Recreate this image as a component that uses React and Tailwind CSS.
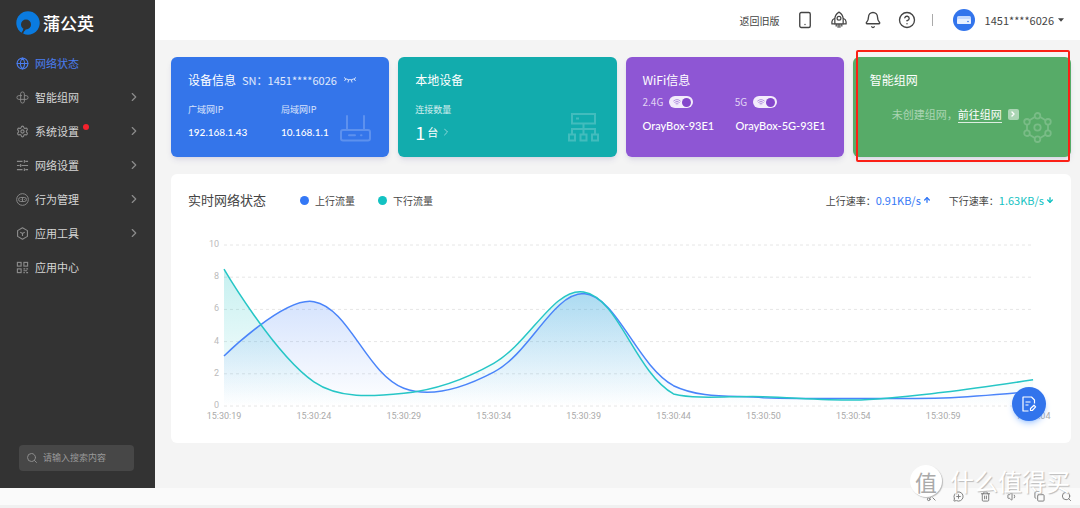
import {
  Globe,
  Settings,
  Smartphone,
  Bell,
  CircleHelp,
  ChevronRight,
  Search,
  Wifi,
  ArrowUp,
  ArrowDown,
  Trash2,
  Volume1,
  Copy,
  Scissors,
  MessageCirclePlus,
} from 'lucide-react'

const times = ['15:30:19', '15:30:24', '15:30:29', '15:30:34', '15:30:39', '15:30:44', '15:30:50', '15:30:54', '15:30:59', '15:31:04']
const upload = [3.1, 6.48, 1.1, 2.1, 6.98, 1.26, 0.52, 0.46, 0.5, 0.91]
const download = [8.5, 1.5, 0.79, 2.65, 7.08, 0.75, 0.58, 0.37, 0.85, 1.63]

const BASE = 180
const SMOOTH = 0.36
const toPoint = (v, i) => [53 + i * 89.9, BASE - v * 16.1]

// smooth bezier line, control points never leave the range of the data
function smoothLine(values) {
  const pts = values.map(toPoint)
  const ys = pts.map((p) => p[1])
  const clamp = (y) => Math.min(Math.max(y, Math.min(...ys)), Math.max(...ys))
  const dist = (a, b) => Math.hypot(a[0] - b[0], a[1] - b[1])

  const controls = pts.map((p, i) => {
    const prev = pts[i - 1]
    const next = pts[i + 1]
    if (!prev || !next) return [p, p]
    const vx = (next[0] - prev[0]) * SMOOTH
    const vy = (next[1] - prev[1]) * SMOOTH
    const d0 = dist(p, prev)
    const d1 = dist(p, next)
    const a = d0 / (d0 + d1)
    const b = d1 / (d0 + d1)
    return [
      [p[0] - vx * a, clamp(p[1] - vy * a)],
      [p[0] + vx * b, clamp(p[1] + vy * b)],
    ]
  })

  return pts
    .map((p, i) => (i === 0 ? `M${p}` : `C${controls[i - 1][1]} ${controls[i][0]} ${p}`))
    .join(' ')
}

function MeshIcon({ className }) {
  return (
    <svg viewBox="0 0 14 14" fill="none" stroke="currentColor" className={className}>
      <path d="M5 5V3a2 2 0 0 1 4 0v6.500M9 5h2a2 2 0 0 1 0 4H4.500M9 9v2a2 2 0 0 1-4 0V4.500M5 9H3a2 2 0 0 1 0-4h3.500" />
    </svg>
  )
}

function SlidersIcon({ className }) {
  return (
    <svg viewBox="0 0 14 14" fill="none" stroke="currentColor" strokeWidth="1.200" className={className}>
      <path d="M1 2.500h6M10 2.500h3M9 1v3M1 7h3M6 7h7M5 5.500v3M1 11.500h6M10 11.500h3M9 10v3" />
    </svg>
  )
}

function BehaviorIcon({ className }) {
  return (
    <svg viewBox="0 0 14 14" fill="none" stroke="currentColor" className={className}>
      <circle cx="7" cy="7" r="6.300" />
      <rect x="2.800" y="4.800" width="8.400" height="4.400" rx="2.200" />
      <path d="M7 5v4M5 7h.8M8.500 7h.8" />
    </svg>
  )
}

function ToolsIcon({ className }) {
  return (
    <svg viewBox="0 0 14 14" fill="none" stroke="currentColor" strokeWidth="1.200" strokeLinejoin="round" className={className}>
      <path d="M7 .9l5.300 3v6.200l-5.300 3-5.300-3V3.900z" />
      <path d="M4.500 5.500L7 7l2.500-1.500M7 7v2.800" />
    </svg>
  )
}

function AppsIcon({ className }) {
  return (
    <svg viewBox="0 0 14 14" fill="none" stroke="currentColor" strokeWidth="1.200" className={className}>
      <rect x="1.500" y="1.500" width="4" height="4" />
      <rect x="8.500" y="1.500" width="4" height="4" />
      <rect x="1.500" y="8.500" width="4" height="4" />
      <path d="M8 8.500h2M11 8.500h2M8 10.500h4M8 12.500h1.500M11 12.500h2" />
    </svg>
  )
}

function RocketIcon({ className }) {
  return (
    <svg viewBox="0 0 16 16" fill="none" stroke="currentColor" strokeWidth="1.100" strokeLinejoin="round" className={className}>
      <path d="M8 1C5.500 2.600 4.300 4.600 4.300 7v4.500h7.400V7C11.700 4.600 10.500 2.600 8 1z" />
      <circle cx="8" cy="6.500" r="1.700" />
      <path d="M4.300 6.500C2.600 7.300 1.700 8.300 1.700 9.500v2h2.600M11.700 6.500c1.700.8 2.600 1.800 2.600 3v2h-2.600M5.500 11.500v2.300M7.200 11.500v3.300M8.800 11.500v3.300M10.500 11.500v2.300" />
    </svg>
  )
}

function Logo() {
  return (
    <svg viewBox="0 0 24 24" className="size-6">
      <circle cx="12" cy="12" r="11.700" fill="#0a7be0" />
      <circle cx="10" cy="13.500" r="5" fill="#333" />
      <path d="M6.800 17.200c.8 1.400.2 2.500-1.400 4.300l1.700 1.900c.3-2 .9-3.200 2.900-4.900z" fill="#333" />
    </svg>
  )
}

const menu = [
  { label: '网络状态', icon: Globe, active: true },
  { label: '智能组网', icon: MeshIcon, more: true },
  { label: '系统设置', icon: Settings, more: true, dot: true },
  { label: '网络设置', icon: SlidersIcon, more: true },
  { label: '行为管理', icon: BehaviorIcon, more: true },
  { label: '应用工具', icon: ToolsIcon, more: true },
  { label: '应用中心', icon: AppsIcon },
]

function Sidebar() {
  return (
    <aside className="flex w-[155px] shrink-0 flex-col bg-[#333] pb-[17px]">
      <div className="flex h-[46px] items-center gap-[3px] pl-4">
        <Logo />
        <span className="text-[17px] leading-5 font-medium text-white">蒲公英</span>
      </div>
      <nav>
        {menu.map(({ label, icon: Icon, active, more, dot }) => (
          <a
            key={label}
            href="#"
            className={`flex h-[34px] items-center pr-3.5 pl-4 text-[11px] ${active ? 'text-[#4a7df0]' : 'text-[#d6d6d6]'}`}
          >
            <Icon className={`mr-1.5 size-[13px] ${active ? '' : 'text-[#8c8c8c]'}`} />
            {label}
            {dot && <span className="mb-2 ml-1 size-1.5 rounded-full bg-[#f5222d]" />}
            {more && <ChevronRight className="ml-auto size-3.5 text-[#8c8c8c]" />}
          </a>
        ))}
      </nav>
      <label className="mt-auto mr-[21px] ml-[19px] flex h-[26px] items-center gap-[5px] rounded-sm bg-[#474747] px-[7px]">
        <Search className="size-3 shrink-0 text-[#8c8c8c]" />
        <input
          type="text"
          aria-label="搜索"
          placeholder="请输入搜索内容"
          className="w-full min-w-0 bg-transparent text-[9px] text-white outline-none placeholder:text-[#999]"
        />
      </label>
    </aside>
  )
}

function Header() {
  return (
    <header className="flex h-10 items-center justify-end bg-white pr-4 text-[#444]">
      <a href="#" className="mr-4 text-[10px]">返回旧版</a>
      <div className="flex items-center gap-4">
        <button aria-label="手机"><Smartphone strokeWidth={1.8} className="size-[18px]" /></button>
        <button aria-label="升级"><RocketIcon className="size-[18px]" /></button>
        <button aria-label="通知"><Bell strokeWidth={1.8} className="size-[18px]" /></button>
        <button aria-label="帮助"><CircleHelp strokeWidth={1.8} className="size-[18px]" /></button>
        <span className="h-3 w-px bg-[#aaa]" />
      </div>
      <button className="ml-5 flex items-center text-[11px]">
        <span className="mr-2.5 flex size-[22px] items-center justify-center rounded-full bg-[#3274ec]">
          <svg viewBox="0 0 14 8" className="h-2 w-3.5">
            <rect width="14" height="8" rx="1.500" fill="#c3d8fd" />
            <rect y="3" width="14" height="5" rx="1.500" fill="#e8f0ff" />
            <circle cx="11" cy="5.500" r=".8" fill="#3274ec" />
          </svg>
        </span>
        1451****6026
        <svg viewBox="0 0 6 4" className="ml-1 h-1 w-1.5"><path d="M0 .3h6L3 3.700z" fill="#444" /></svg>
      </button>
    </header>
  )
}

function Card({ className, children }) {
  return (
    <section className={`relative h-[100px] rounded-md px-[17px] pt-[13px] text-white shadow-md shadow-indigo-900/10 ${className}`}>
      {children}
    </section>
  )
}

function WifiSwitch({ label }) {
  return (
    <label className="relative flex w-[93px] items-center gap-1.5 text-[10px] leading-3 text-white/75">
      {label}
      <input type="checkbox" defaultChecked className="sr-only" />
      <span className="flex h-3 w-6 items-center justify-between rounded-full bg-[#f3ecfb] px-0.5">
        <Wifi strokeWidth={3} className="ml-0.5 size-2 text-[#b493e0]" />
        <span className="size-[9px] rounded-full bg-[#8446cb]" />
      </span>
    </label>
  )
}

function Cards() {
  return (
    <div className="grid grid-cols-4 gap-[9px]">
      <Card className="bg-[#3475ea]">
        <h2 className="flex items-center text-[12px] leading-5">
          设备信息
          <span className="ml-1.5 text-[11px] text-white/85">SN：1451****6026</span>
          <svg viewBox="0 0 14 8" fill="none" stroke="currentColor" strokeOpacity=".8" className="ml-1.5 h-2 w-3.5">
            <path d="M1 1.500c3.500 3 8.500 3 12 0M2.800 3L1.500 5M5.500 4L5 6.500M8.500 4L9 6.500M11.200 3l1.300 2" />
          </svg>
        </h2>
        <dl className="mt-3 flex">
          <div className="w-[93px]">
            <dt className="text-[9px] leading-4 text-white/80">广域网IP</dt>
            <dd className="mt-1 font-[Lato] text-[10px] leading-5 font-medium">192.168.1.43</dd>
          </div>
          <div>
            <dt className="text-[9px] leading-4 text-white/80">局域网IP</dt>
            <dd className="mt-1 font-[Lato] text-[10px] leading-5 font-medium">10.168.1.1</dd>
          </div>
        </dl>
        <svg viewBox="0 0 31 31" fill="none" stroke="white" strokeWidth="2" strokeLinecap="round" className="absolute right-[18px] bottom-[15px] size-[31px] opacity-20">
          <rect x="1" y="19" width="29" height="10.500" rx="2" />
          <path d="M7 18V5M24 18V5M9 24.300h6M21 24.300h.5" />
        </svg>
      </Card>

      <Card className="bg-[#12acad]">
        <h2 className="text-[12px] leading-5">本地设备</h2>
        <p className="mt-3 text-[9px] leading-4 text-white/80">连接数量</p>
        <a href="#" className="mt-1 flex items-center gap-0.5 text-[11px] leading-5">
          <span className="text-[18px]">1</span>
          台
          <ChevronRight strokeWidth={1.500} className="size-3 opacity-70" />
        </a>
        <svg viewBox="0 0 31 31" fill="none" stroke="white" strokeWidth="2" className="absolute right-[18px] bottom-[15px] size-[31px] opacity-20">
          <path d="M4 3h23v9.500H4zM8 7.500h3M15.500 12.500v11M4 23.500V18h23v5.500M1 23.500h6v6H1zM12.500 23.500h6v6h-6zM24 23.500h6v6h-6z" />
        </svg>
      </Card>

      <Card className="bg-[#8e56d4]">
        <h2 className="text-[12px] leading-5">WiFi信息</h2>
        <div className="mt-1.5 flex">
          <WifiSwitch label="2.4G" />
          <WifiSwitch label="5G" />
        </div>
        <div className="mt-2 flex font-[Lato] text-[11px] leading-5 font-medium whitespace-nowrap">
          <span className="w-[93px] shrink-0">OrayBox-93E1</span>
          <span>OrayBox-5G-93E1</span>
        </div>
      </Card>

      <Card className="bg-[#57ab68]">
        <h2 className="text-[12px] leading-5">智能组网</h2>
        <p className="mt-3.5 flex items-center pl-[22px] text-[11px] leading-5 whitespace-nowrap text-white/50">
          未创建组网，
          <a href="#" className="flex items-center text-white">
            <span className="border-b border-white/80 leading-4">前往组网</span>
            <span className="ml-1.5 flex size-[11px] items-center justify-center rounded-xs bg-white/50">
              <ChevronRight strokeWidth={4} className="size-2" />
            </span>
          </a>
        </p>
        <svg viewBox="0 0 31 31" fill="none" stroke="white" strokeWidth="1.800" className="absolute right-[18px] bottom-[14px] size-[31px] opacity-20">
          <circle cx="15.500" cy="15.500" r="3.200" />
          <circle cx="15.500" cy="3.800" r="2.800" />
          <circle cx="15.500" cy="27.200" r="2.800" />
          <circle cx="5" cy="9.800" r="2.800" />
          <circle cx="26" cy="9.800" r="2.800" />
          <circle cx="5" cy="21.200" r="2.800" />
          <circle cx="26" cy="21.200" r="2.800" />
          <path d="M12.800 5L7.500 8.300M18.200 5l5.300 3.300M5 12.600v5.800M26 12.600v5.800M7.500 22.700l5.300 3.300M23.500 22.700L18.200 26" />
        </svg>
        <div className="absolute -top-[7px] right-px -bottom-[5px] left-[3px] rounded-xs border-2 border-[#fb2016]" />
      </Card>
    </div>
  )
}

function Chart() {
  const right = 53 + 9 * 89.9
  const up = smoothLine(upload)
  const down = smoothLine(download)
  const close = ` L${right} ${BASE} L53 ${BASE} Z`

  return (
    <svg viewBox="0 0 900 200" className="block h-auto w-full font-[Roboto]">
      <defs>
        <linearGradient id="up" x1="0" y1="0" x2="0" y2="1">
          <stop offset="0" stopColor="#3477f5" stopOpacity=".22" />
          <stop offset="1" stopColor="#3477f5" stopOpacity="0" />
        </linearGradient>
        <linearGradient id="down" x1="0" y1="0" x2="0" y2="1">
          <stop offset="0" stopColor="#13c2c2" stopOpacity=".24" />
          <stop offset="1" stopColor="#13c2c2" stopOpacity="0" />
        </linearGradient>
      </defs>
      {[0, 2, 4, 6, 8, 10].map((v) => (
        <g key={v}>
          <line x1="53" x2={right} y1={BASE - v * 16.1} y2={BASE - v * 16.1} stroke="#e6e6e6" strokeDasharray="3 3" />
          <text x="48" y={BASE - v * 16.1 + 2} textAnchor="end" fontSize="9" fill="#bbb">{v}</text>
        </g>
      ))}
      {times.map((t, i) => (
        <text key={t} x={53 + i * 89.9} y="193" textAnchor="middle" fontSize="9" fill="#aaa">{t}</text>
      ))}
      <path d={up + close} fill="url(#up)" />
      <path d={down + close} fill="url(#down)" />
      <path d={up} fill="none" stroke="#4a84fa" strokeWidth="1.500" />
      <path d={down} fill="none" stroke="#26c6c6" strokeWidth="1.500" />
    </svg>
  )
}

function Status() {
  return (
    <section className="relative mt-[17px] rounded-md bg-white pb-[17px]">
      <div className="flex h-[52px] items-center pr-[17px] pl-[17px] text-[10px] text-[#444]">
        <h2 className="mr-[34px] text-[13px]">实时网络状态</h2>
        <span className="mr-1.5 size-[9px] rounded-full bg-[#3478f6]" />
        上行流量
        <span className="mr-1.5 ml-[23px] size-[9px] rounded-full bg-[#13c2c2]" />
        下行流量
        <span className="ml-auto flex items-center">
          上行速率：
          <span className="flex items-center gap-0.5 text-[11px] text-[#3478f6]">0.91KB/s <ArrowUp strokeWidth={4} className="size-2" /></span>
        </span>
        <span className="ml-[18px] flex items-center">
          下行速率：
          <span className="flex items-center gap-0.5 text-[11px] text-[#13c2c2]">1.63KB/s <ArrowDown strokeWidth={4} className="size-2" /></span>
        </span>
      </div>
      <Chart />
      <button
        aria-label="反馈"
        className="absolute right-[25px] bottom-[22px] flex size-[34px] items-center justify-center rounded-full bg-[#3274ec] text-white shadow-md shadow-blue-500/30"
      >
        <svg viewBox="0 0 16 16" fill="none" stroke="currentColor" strokeWidth="1.200" strokeLinejoin="round" className="size-4">
          <path d="M7.500 15H2V1h8.500L13.500 4v3.500M4.500 6h5M4.500 9h3" />
          <path d="M9.500 14.500v-2l3.500-3.300 1.600 1.600-3.300 3.700z" />
        </svg>
      </button>
    </section>
  )
}

function App() {
  return (
    <div className="relative flex min-h-screen flex-col bg-[#f4f4f4] font-['Noto_Sans_CJK_SC',sans-serif]">
      <div className="flex flex-1">
        <Sidebar />
        <div className="min-w-0 flex-1">
          <Header />
          <main className="pt-[17px] pr-[9px] pb-[45px] pl-4">
            <Cards />
            <Status />
          </main>
        </div>
      </div>

      <footer className="border-b-3 border-[#f0f0f0] bg-[#fafafa]">
        <div className="flex h-[17px] items-center justify-end gap-4 pr-2 text-[#777]">
          <button aria-label="截图"><Scissors className="size-[11px]" /></button>
          <button aria-label="添加"><MessageCirclePlus className="size-[11px]" /></button>
          <button aria-label="删除"><Trash2 className="size-[11px]" /></button>
          <button aria-label="声音"><Volume1 className="size-[11px]" /></button>
          <button aria-label="窗口"><Copy className="size-[11px]" /></button>
          <button aria-label="搜索"><Search className="size-[11px]" /></button>
        </div>
      </footer>

      {/* watermark */}
      <div className="pointer-events-none absolute right-2.5 bottom-[11px] flex items-center gap-2 text-white">
        <span className="flex size-8 items-center justify-center rounded-full bg-white text-[22px] leading-none text-[#aaa] shadow-[1px_1px_1px_#bbb]">值</span>
        <span className="text-[24px] leading-8 text-shadow-[1px_1px_1px_#bbb]">什么值得买</span>
      </div>
    </div>
  )
}

export default App
